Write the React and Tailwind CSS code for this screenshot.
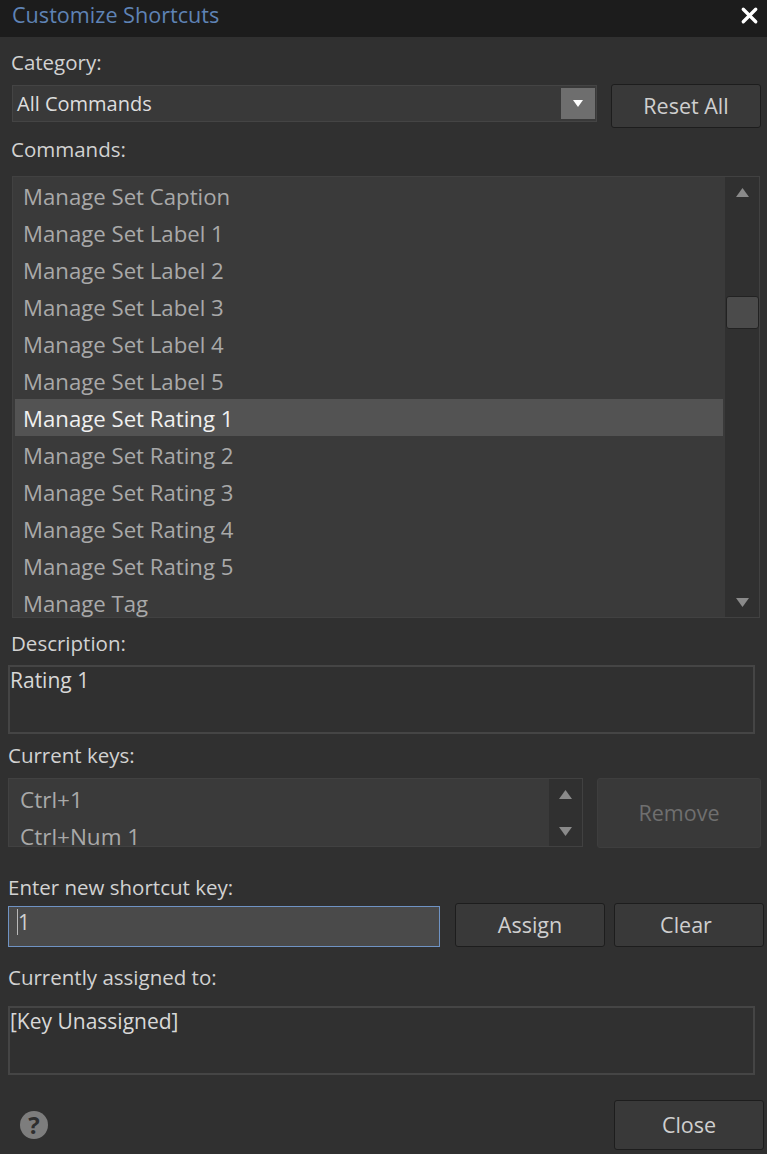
import { X } from 'lucide-react';

const commands = [
  'Manage Set Caption',
  'Manage Set Label 1',
  'Manage Set Label 2',
  'Manage Set Label 3',
  'Manage Set Label 4',
  'Manage Set Label 5',
  'Manage Set Rating 1',
  'Manage Set Rating 2',
  'Manage Set Rating 3',
  'Manage Set Rating 4',
  'Manage Set Rating 5',
  'Manage Tag',
];

const Up = ({ className }) => (
  <svg width="13" height="9" viewBox="0 0 13 9" className={className}>
    <path d="M6.5 0L13 9H0z" fill="#8a8a8a" />
  </svg>
);

const Down = ({ className }) => (
  <svg width="13" height="9" viewBox="0 0 13 9" className={className}>
    <path d="M0 0h13L6.5 9z" fill="#8a8a8a" />
  </svg>
);

const Button = ({ children, className = '' }) => (
  <button className={`flex items-center justify-center rounded-[3px] border border-[#1d1d1d] bg-[#393939] text-[#cfcfcf] text-[21.5px] ${className}`}>
    {children}
  </button>
);

const Label = ({ children, className = '' }) => (
  <div className={`h-[26px] text-[20.5px] leading-[24px] text-[#d2d2d2] ${className}`}>{children}</div>
);

const ReadBox = ({ children }) => (
  <div className="w-[747px] h-[69px] border-2 border-[#454545] text-[21px] leading-[26px] text-[#d8d8d8]">
    {children}
  </div>
);

export default function App() {
  return (
    <div className="w-[767px] h-[1154px] overflow-hidden bg-[#303030] font-['Open_Sans','Noto_Sans',sans-serif]">
      <div className="flex h-[37px] items-center justify-between bg-[#1c1c1c] pb-[6px] pl-3 pr-[5px]">
        <span className="text-[21.6px] text-[#5f83b5]">Customize Shortcuts</span>
        <X size={25} strokeWidth={3.2} className="text-white" />
      </div>

      <Label className="ml-[11px] mt-[13px]">Category:</Label>

      <div className="ml-3 mt-[8px] flex items-start">
        <div className="mt-[1px] flex h-[37px] w-[585px] items-center justify-between border border-[#444444] bg-[#393939] pl-[4px] pr-[1px]">
          <span className="text-[20px] leading-[26px] text-[#dedede]">All Commands</span>
          <div className="flex h-[31px] w-[34px] items-center justify-center bg-[#6e6e6e]">
            <svg width="10" height="7" viewBox="0 0 10 7">
              <path d="M0 0h10L5 7z" fill="#ffffff" />
            </svg>
          </div>
        </div>
        <Button className="ml-[14px] h-[44px] w-[150px]">Reset All</Button>
      </div>

      <Label className="ml-[11px] mt-[9px]">Commands:</Label>

      <div className="ml-3 mt-[13px] flex h-[442px] w-[748px] overflow-hidden border border-[#414141] bg-[#3a3a3a]">
        <div className="w-[712px] pl-[2px]">
          {commands.map(name => (
            <div
              key={name}
              className={`h-[37px] w-[708px] pl-[8px] text-[22.2px] leading-[39px] ${
                name === 'Manage Set Rating 1' ? 'bg-[#535353] text-[#f0f0f0]' : 'text-[#a9a9a9]'
              }`}
            >
              {name}
            </div>
          ))}
        </div>
        <div className="relative flex h-full w-[34px] flex-col items-center justify-between bg-[#303030] pb-[10px] pt-[11px]">
          <Up />
          <div className="absolute left-[1px] top-[119px] h-[33px] w-[33px] rounded-[3px] border border-[#222222] bg-[#4b4b4b]" />
          <Down />
        </div>
      </div>

      <Label className="ml-[11px] mt-[13px]">Description:</Label>
      <div className="ml-2 mt-[8px]">
        <ReadBox>Rating 1</ReadBox>
      </div>

      <Label className="ml-2 mt-[9px]">Current keys:</Label>

      <div className="ml-2 mt-[9px] flex">
        <div className="flex h-[69px] w-[575px] overflow-hidden border border-[#414141] bg-[#3a3a3a]">
          <div className="w-[540px] pl-[11px] pt-[2px] text-[22.5px] leading-[37px] text-[#a9a9a9]">
            <div>Ctrl+1</div>
            <div>Ctrl+Num 1</div>
          </div>
          <div className="flex w-[33px] flex-col items-center justify-between bg-[#303030] pb-[10px] pt-[11px]">
            <Up />
            <Down />
          </div>
        </div>
        <Button className="ml-[14px] h-[70px] w-[164px] border-[#3e3e3e] bg-[#383838] !text-[#6f6f6f]">Remove</Button>
      </div>

      <Label className="ml-2 mt-[27px]">Enter new shortcut key:</Label>

      <div className="ml-2 mt-[2px] flex items-end">
        <div className="flex h-[41px] w-[432px] items-start border border-[#6f93c4] bg-[#4a4a4a] pl-[8px] pt-[2px] text-[21px] leading-[26px] text-[#d0d0d0]">
          <span className="border-l border-[#b8b8b8]">1</span>
        </div>
        <Button className="ml-[15px] h-[44px] w-[150px]">Assign</Button>
        <Button className="ml-[9px] h-[44px] w-[150px] pr-[6px]">Clear</Button>
      </div>

      <Label className="ml-2 mt-[18px]">Currently assigned to:</Label>
      <div className="ml-2 mt-[15px]">
        <ReadBox>[Key Unassigned]</ReadBox>
      </div>

      <div className="ml-5 mt-[25px] flex items-center justify-between pr-[3px]">
        <div className="flex h-[28px] w-[28px] items-center justify-center rounded-full bg-[#7d7d7d] text-[24px] font-bold text-[#2e2e2e]">
          ?
        </div>
        <Button className="h-[50px] w-[150px]">Close</Button>
      </div>
    </div>
  );
}
